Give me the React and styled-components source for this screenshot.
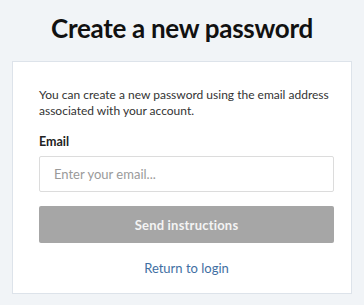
import React from "react";
import styled, { createGlobalStyle } from "styled-components";

const GlobalStyle = createGlobalStyle`
  html, body {
    margin: 0;
    padding: 0;
    background: #f1f4f7;
    font-family: Lato, "Open Sans", sans-serif;
  }
`;

const Page = styled.div`
  width: 364px;
  height: 305px;
  box-sizing: border-box;
  padding: 12px 12px 0;
  display: flex;
  flex-direction: column;
`;

const Title = styled.h1`
  margin: 0 0 16px;
  height: 33px;
  font-size: 26px;
  line-height: 33px;
  font-weight: 700;
  text-align: center;
  letter-spacing: -0.3px;
  color: #111;
`;

const Card = styled.div`
  background: #fff;
  border: 1px solid #dde3ea;
  padding: 25px 17px 16px 26px;
  display: flex;
  flex-direction: column;
`;

const Intro = styled.p`
  margin: 0 0 15px;
  font-size: 12px;
  line-height: 16px;
  color: #333;
`;

const Label = styled.label`
  font-size: 12.5px;
  font-weight: 700;
  color: #222;
  line-height: 16px;
  margin-bottom: 6px;
`;

const Input = styled.input`
  height: 36px;
  box-sizing: border-box;
  border: 1px solid #dcdcdc;
  border-radius: 2px;
  padding: 0 14px;
  font-family: inherit;
  font-size: 13px;
  color: #333;
  outline: none;
  margin-bottom: 14px;
  &::placeholder {
    color: #9a9a9a;
  }
`;

const Button = styled.button`
  height: 37px;
  border: none;
  border-radius: 2px;
  background: #a6a6a6;
  color: #f4f4f4;
  font-family: inherit;
  font-size: 13px;
  font-weight: 700;
  letter-spacing: 0.2px;
  margin-bottom: 16px;
`;

const BackLink = styled.a`
  align-self: center;
  font-size: 13px;
  color: #3f6fa3;
  text-decoration: none;
  line-height: 18px;
`;

export default function App() {
  return (
    <>
      <GlobalStyle />
      <Page>
        <Title>Create a new password</Title>
        <Card>
          <Intro>
            You can create a new password using the email address associated
            with your account.
          </Intro>
          <Label>Email</Label>
          <Input placeholder="Enter your email..." />
          <Button>Send instructions</Button>
          <BackLink href="#">Return to login</BackLink>
        </Card>
      </Page>
    </>
  );
}
